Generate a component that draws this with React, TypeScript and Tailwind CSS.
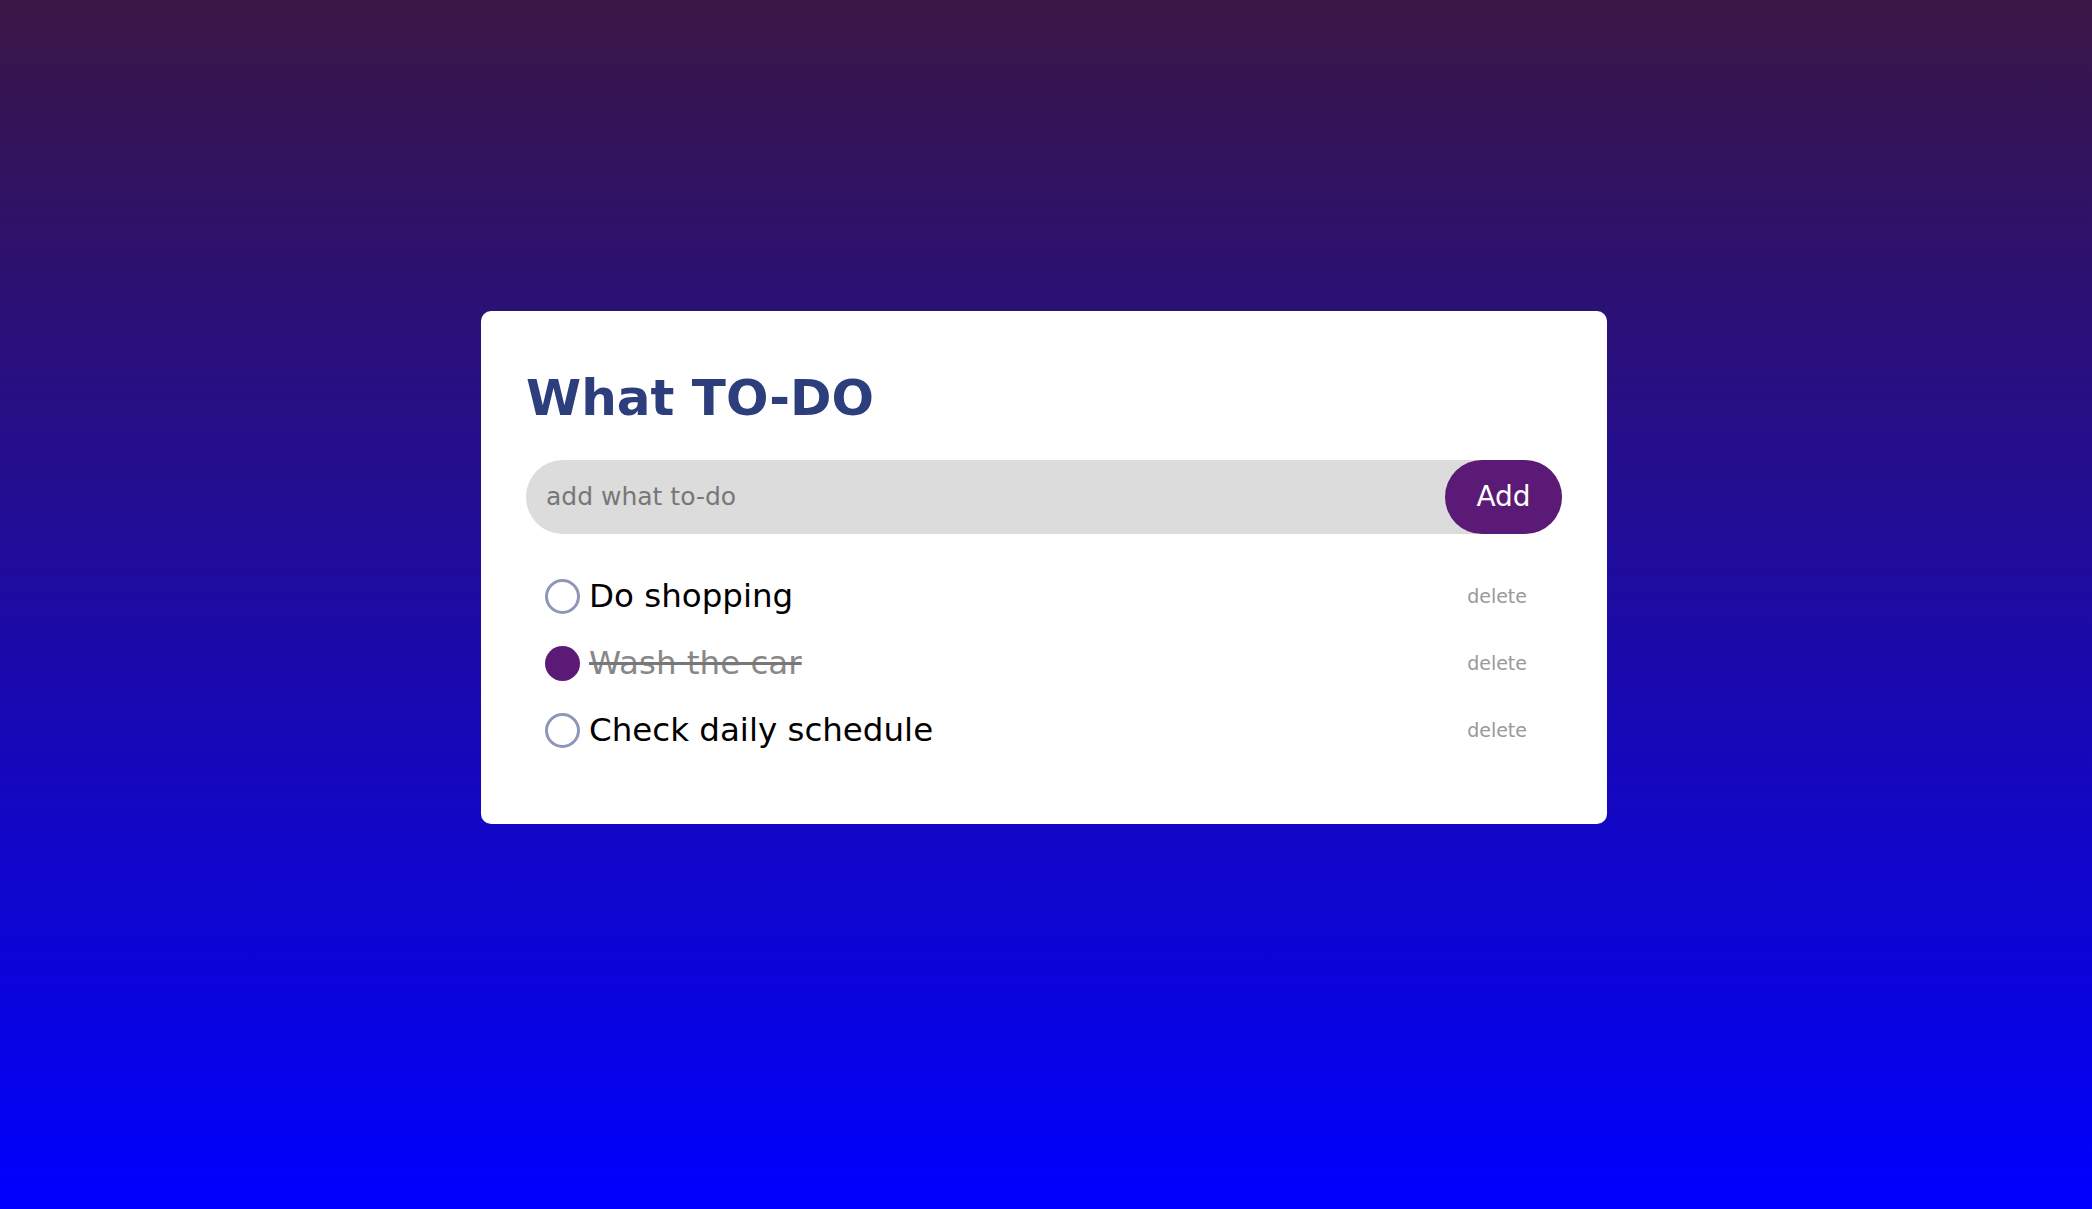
import { useState } from 'react';

type Todo = { id: number; text: string; done: boolean };

export default function App() {
  const [todos, setTodos] = useState<Todo[]>([
    { id: 1, text: 'Do shopping', done: false },
    { id: 2, text: 'Wash the car', done: true },
    { id: 3, text: 'Check daily schedule', done: false },
  ]);
  const [draft, setDraft] = useState('');

  const add = () => {
    if (!draft.trim()) return;
    setTodos([...todos, { id: Date.now(), text: draft.trim(), done: false }]);
    setDraft('');
  };

  return (
    <main className="min-h-screen bg-linear-to-b/srgb from-[#3a1646] to-[#0000ff] flex justify-center pt-[311px] font-['DejaVu_Sans',sans-serif]">
      <div className="w-[1126px] h-[513px] -translate-x-[2px] bg-white rounded-[10px] px-[45px] pt-[62px]">
        {/* title */}
        <h1 className="text-[50px] leading-none font-bold text-[#2d3e7d] mb-[37px]">What TO-DO</h1>

        {/* input row */}
        <div className="flex h-[74px] bg-[#dcdcdc] rounded-full">
          <input
            value={draft}
            onChange={(e) => setDraft(e.target.value)}
            placeholder="add what to-do"
            className="flex-1 bg-transparent outline-none pl-[20px] text-[25px] text-[#444] placeholder:text-[#777]"
          />
          <button
            onClick={add}
            className="w-[117px] h-full rounded-full bg-[#5b1a76] text-white text-[28px]"
          >
            Add
          </button>
        </div>

        {/* list */}
        <ul className="mt-[29px] pl-[19px] pr-[35px]">
          {todos.map((t) => (
            <li key={t.id} className="h-[67px] flex items-center">
              <button
                onClick={() => setTodos(todos.map((x) => (x.id === t.id ? { ...x, done: !x.done } : x)))}
                className={
                  t.done
                    ? 'w-[35px] h-[35px] rounded-full bg-[#5b1a76] shrink-0'
                    : 'w-[35px] h-[35px] rounded-full border-[3px] border-[#8e96b9] shrink-0'
                }
              />
              <span
                className={
                  t.done
                    ? 'ml-[9px] text-[32.5px] text-[#888] line-through decoration-[#777]'
                    : 'ml-[9px] text-[32.5px] text-black'
                }
              >
                {t.text}
              </span>
              <button
                onClick={() => setTodos(todos.filter((x) => x.id !== t.id))}
                className="ml-auto text-[19px] text-[#999]"
              >
                delete
              </button>
            </li>
          ))}
        </ul>
      </div>
    </main>
  );
}
